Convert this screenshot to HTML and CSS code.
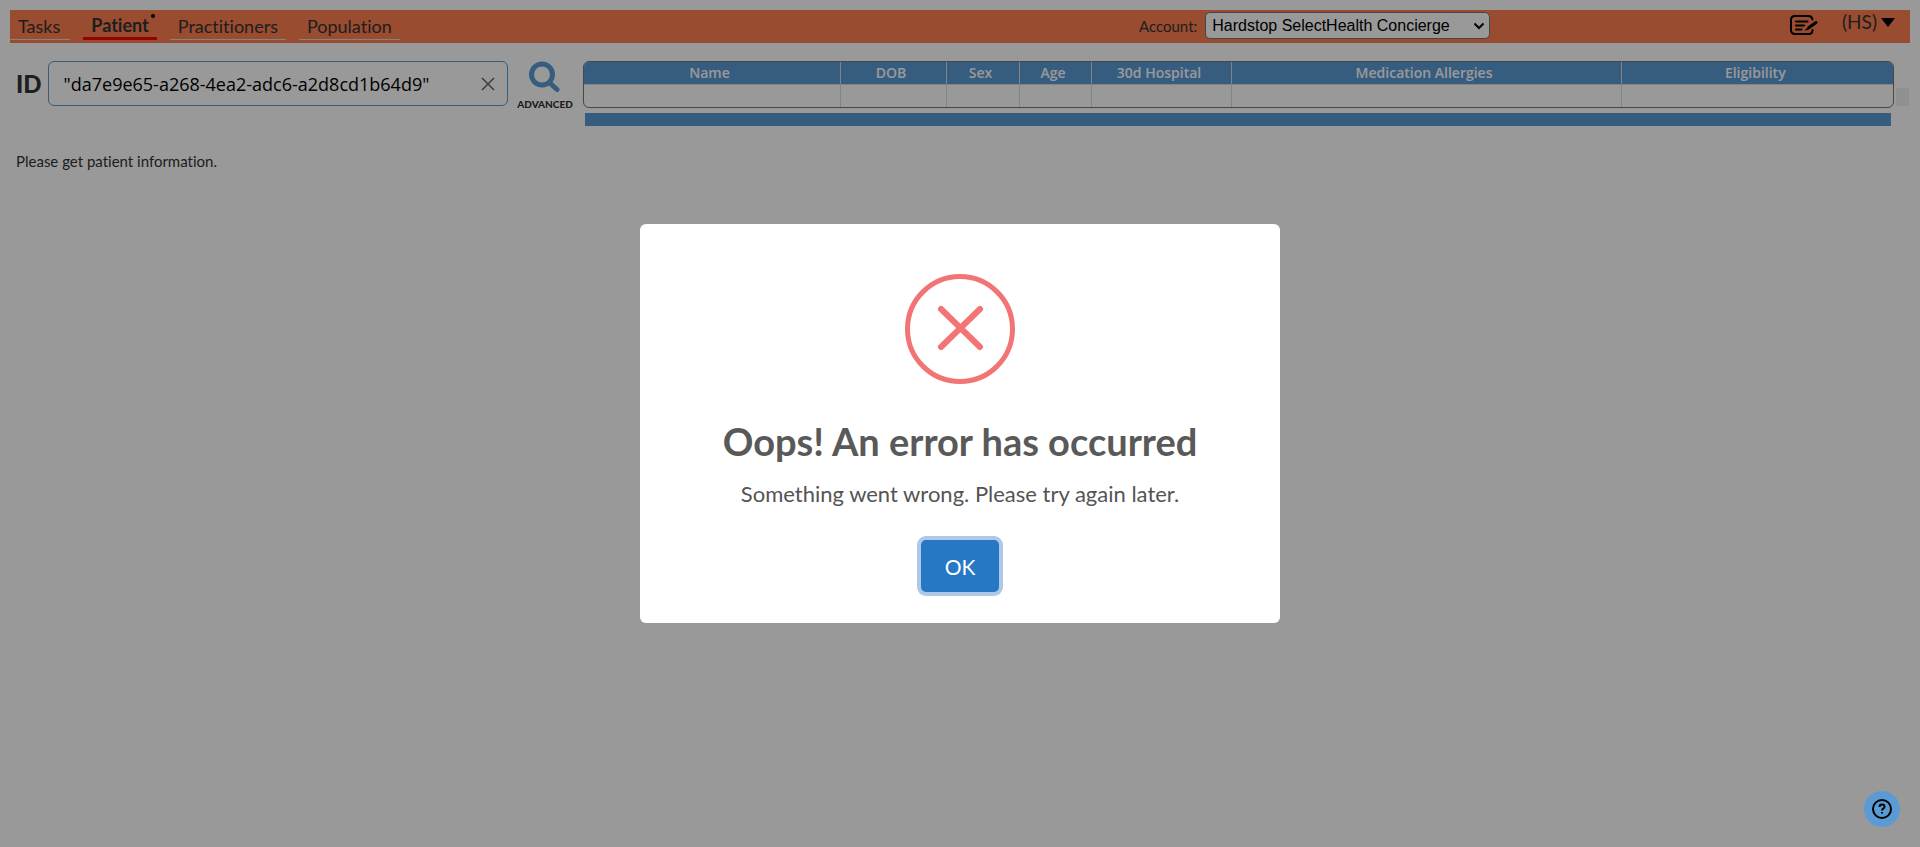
FILE: index.html
```html
<!DOCTYPE html>
<html lang="en">
<head>
<meta charset="utf-8">
<title>Patient</title>
<link rel="stylesheet" href="styles.css">
</head>
<body>
<header class="topbar">
  <nav class="tabs">
    <a class="tab tab-first" href="#">Tasks</a>
    <a class="tab tab-active" href="#">Patient<span class="dot"></span></a>
    <a class="tab" href="#">Practitioners</a>
    <a class="tab" href="#">Population</a>
  </nav>
  <div class="account">
    <label for="account">Account:</label>
    <div class="select-wrap">
      <select id="account"><option>Hardstop SelectHealth Concierge</option></select>
      <svg class="chevron" viewBox="0 0 12 8" aria-hidden="true"><path d="M1.500 1.500 6 6 10.500 1.500"/></svg>
    </div>
  </div>
  <div class="tools">
    <button class="plain" type="button" aria-label="Notes">
      <svg class="note-icon" viewBox="0 0 28 20" aria-hidden="true">
        <path d="M22.500 4.500C22 2 20.500 1 18.500 1H5C2.500 1 1 2.500 1 5v10c0 2.500 1.500 4 4 4h14c2.200 0 3.500-1.500 3.500-4" />
        <path class="lines" d="M6 6.500h11.500M6 10.500h8M6 14.500h5.500"/>
        <path class="pen" d="M26 7.500 19 12.500" />
        <path class="tip" d="m19 12-3.500 3 3-.8"/>
      </svg>
    </button>
    <button class="plain user" type="button">(HS)<span class="caret"></span></button>
  </div>
</header>

<section class="patient-bar">
  <div class="id-field">
    <label class="id-label" for="pid">ID</label>
    <div class="id-box">
      <input id="pid" type="text" value="&quot;da7e9e65-a268-4ea2-adc6-a2d8cd1b64d9&quot;">
      <button class="plain" type="button" aria-label="Clear"><svg class="clear-icon" viewBox="0 0 14 14" aria-hidden="true"><path d="m1 1 12 12M13 1 1 13"/></svg></button>
    </div>
  </div>
  <button class="plain advanced" type="button">
    <svg class="search-icon" viewBox="0 0 32 32" aria-hidden="true"><circle cx="13" cy="13.500" r="10.500"/><path d="m22 23 6 5.500"/></svg>
    ADVANCED
  </button>
  <div class="summary">
    <table class="info">
      <colgroup><col class="c-name"><col class="c-dob"><col class="c-sex"><col class="c-age"><col class="c-hosp"><col class="c-med"><col class="c-elig"></colgroup>
      <thead><tr><th>Name</th><th>DOB</th><th>Sex</th><th>Age</th><th>30d Hospital</th><th>Medication Allergies</th><th>Eligibility</th></tr></thead>
      <tbody><tr><td></td><td></td><td></td><td></td><td></td><td></td><td></td></tr></tbody>
    </table>
    <div class="strip"></div>
  </div>
  <div class="stub"></div>
</section>

<main class="content"><p>Please get patient information.</p></main>

<div class="overlay">
  <div class="dialog" role="alertdialog" aria-labelledby="dlg-title" aria-describedby="dlg-text">
    <svg class="error-icon" viewBox="0 0 110 110" aria-hidden="true"><circle cx="55" cy="55" r="52.500"/><path d="m36 35 39 38M75 35 36 73"/></svg>
    <h2 id="dlg-title">Oops! An error has occurred</h2>
    <p id="dlg-text">Something went wrong. Please try again later.</p>
    <button class="ok" type="button">OK</button>
  </div>
</div>

<button class="help" type="button" aria-label="Help">
  <svg class="help-icon" viewBox="0 0 20 20" aria-hidden="true"><circle cx="10" cy="10" r="9"/><path d="M7.500 8c0-3.300 5-3.300 5 0 0 1.700-2.500 1.700-2.500 3.500M10 13v1.600"/></svg>
</button>
</body>
</html>
```
FILE: styles.css
```css
* { box-sizing: border-box; }
body {
  margin: 0;
  padding: 10px;
  background: #fff;
  color: #333;
  font-family: Lato, "Open Sans", sans-serif;
  font-size: 15px;
  font-variant-ligatures: none;
}
a { color: inherit; text-decoration: none; }
.plain { border: 0; padding: 0; background: none; color: inherit; font: inherit; display: flex; }
svg { display: block; fill: none; stroke: currentColor; }

.topbar {
  display: grid;
  grid-template-columns: 1129px 1fr auto;
  height: 33px;
  background: #ff7f50;
}
.tabs { display: flex; align-items: flex-start; gap: 13px; font-size: 18px; }
.tab {
  position: relative;
  height: 30px;
  padding: 0 8px;
  border-bottom: 1px solid #ddd;
  line-height: 32px;
}
.tab-first { padding-right: 10px; }
.tab-active { border-bottom: 3px solid #f00; font-weight: bold; line-height: 30px; }
.dot { position: absolute; top: 4px; right: 2px; width: 4px; height: 4px; border-radius: 50%; background: #000; }

.account { display: flex; align-items: flex-start; gap: 8px; line-height: 32px; }
.select-wrap { position: relative; margin-top: 2px; }
.select-wrap select {
  display: block;
  width: 285px;
  height: 27px;
  padding: 0 6px;
  border: 1px solid #767676;
  border-radius: 5px;
  appearance: none;
  background: #fff;
  color: #000;
  font: 16px "Liberation Sans", Arial, sans-serif;
}
.chevron { position: absolute; top: 10px; right: 5px; width: 12px; height: 8px; color: #000; stroke-width: 2; pointer-events: none; }

.tools { display: flex; align-items: flex-start; gap: 24px; padding: 4px 15px 0 0; }
.note-icon { width: 28px; height: 20px; margin-top: 1px; color: #000; stroke-width: 2; stroke-linecap: round; }
.note-icon .lines { stroke-width: 2; }
.note-icon .pen { stroke-width: 3; }
.note-icon .tip { stroke-width: 1; fill: #000; }
.user { align-items: center; gap: 4px; font-size: 19px; line-height: 16px; }
.caret { border: 7px solid transparent; border-top: 9px solid #000; border-bottom: 0; }

.patient-bar { display: flex; align-items: flex-start; margin-top: 18px; padding-left: 6px; }
.id-field { display: flex; align-items: center; gap: 6px; }
.id-label { font-size: 24px; font-weight: 900; }
.id-box {
  display: flex;
  align-items: center;
  width: 460px;
  height: 45px;
  padding: 0 12px 0 15px;
  border: 1px solid #5b9bd5;
  border-radius: 6px;
}
.id-box input { flex: 1; min-width: 0; border: 0; padding: 0; outline: 0; background: none; color: #000; font: 18px "Open Sans", "Noto Sans", sans-serif; }
.clear-icon { width: 14px; height: 14px; color: #666; stroke-width: 1.5; }
.advanced { flex-direction: column; align-items: center; gap: 5px; width: 75px; font-size: 10px; font-weight: 900; line-height: 12px; }
.search-icon { width: 32px; height: 32px; color: #5b9bd5; stroke-width: 5; stroke-linecap: round; }

.summary { flex: 1; }
.info {
  width: 100%;
  height: 47px;
  border: 1px solid #777;
  border-radius: 6px;
  border-spacing: 0;
  table-layout: fixed;
  overflow: hidden;
  font: 600 14px "Open Sans", "Noto Sans", sans-serif;
}
.info th { height: 23px; padding: 0 4px 0 0; background: #5b9bd5; color: #fff; font-weight: 600; line-height: 22px; }
.info td { height: 22px; padding: 0; }
.info th, .info td { border-right: 1px solid #ddd; }
.info th { border-bottom: 1px solid #ddd; }
.info th:last-child, .info td:last-child { border-right: 0; }
.c-name { width: 257px; } .c-dob { width: 106px; } .c-sex { width: 73px; } .c-age { width: 72px; }
.c-hosp { width: 140px; } .c-med { width: 390px; }
.strip { height: 13px; margin: 5px 3px 0 2px; background: #5b9bd5; }
.stub { width: 13px; height: 18px; margin: 27px 1px 0 2px; background: #f0f0f0; }

.content { padding-left: 6px; }
.content p { margin: 25px 0 0; line-height: 20px; }

.overlay { position: fixed; inset: 0; display: flex; align-items: center; justify-content: center; background: rgba(0, 0, 0, .4); }
.dialog {
  display: flex;
  flex-direction: column;
  align-items: center;
  width: 640px;
  max-width: 100%;
  padding: 50px 20px 31px;
  border-radius: 6px;
  background: #fff;
  color: #545454;
}
.error-icon { width: 110px; height: 110px; color: #f27474; stroke-width: 5; }
.error-icon path { stroke-width: 6; stroke-linecap: round; }
.dialog h2 { margin: 34px 0 0; font-size: 38px; line-height: 46px; color: #595959; }
.dialog p { margin: 16px 0 32px; font-size: 22px; line-height: 28px; }
.ok {
  width: 78px;
  height: 52px;
  border: 0;
  border-radius: 5px;
  background: #2778c4;
  box-shadow: 0 0 0 4px #adc9e5;
  color: #fff;
  font: 21px Lato, sans-serif;
}

.help {
  position: fixed;
  right: 20px;
  bottom: 20px;
  display: grid;
  place-items: center;
  width: 36px;
  height: 36px;
  padding: 0;
  border: 0;
  border-radius: 50%;
  background: #5b9bd5;
  color: #000;
}
.help-icon { width: 20px; height: 20px; stroke-width: 2; }
```
